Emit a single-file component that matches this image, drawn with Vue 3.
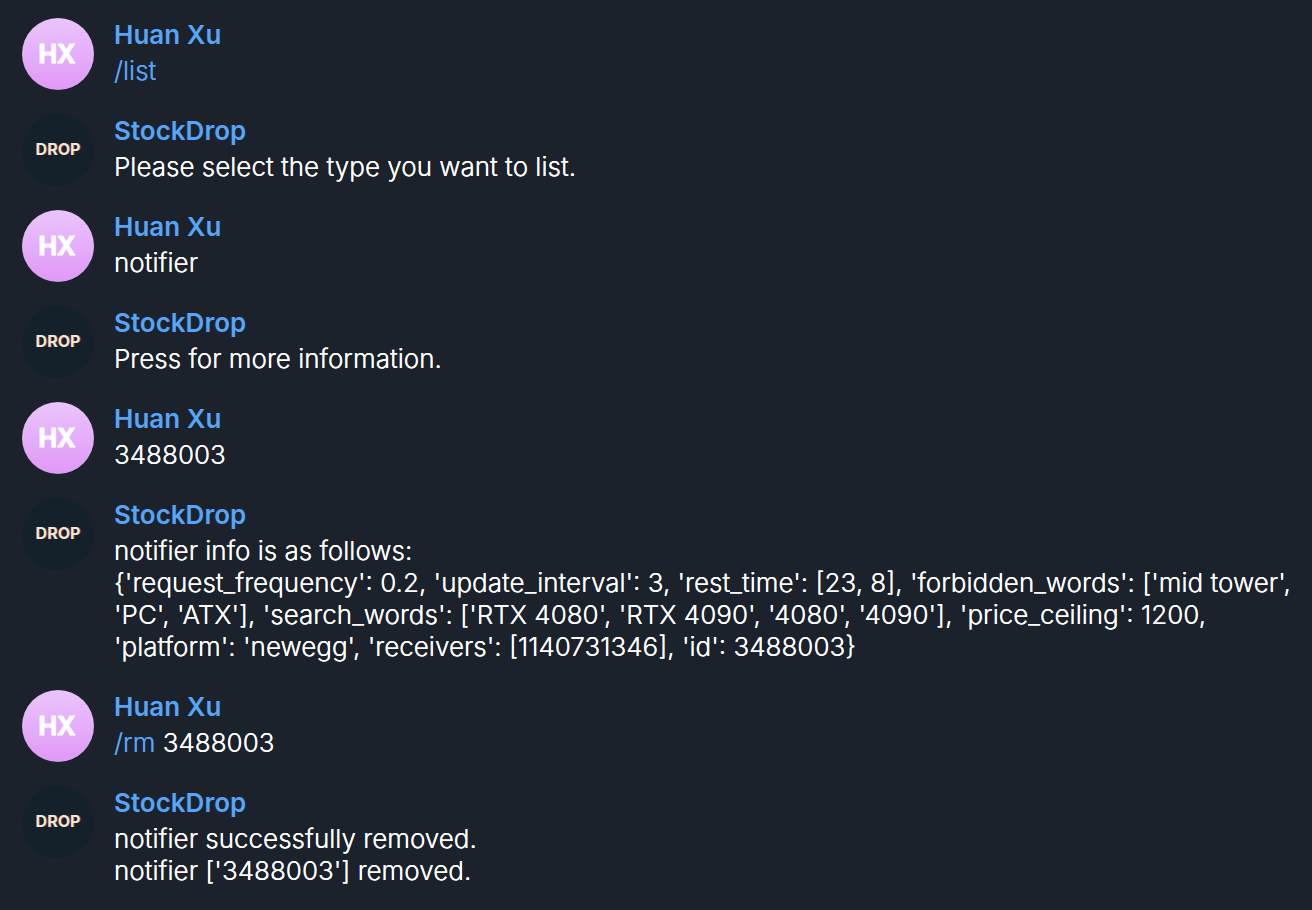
<script setup>
const huan = { name: 'Huan Xu', kind: 'person', initials: 'HX' }
const bot = { name: 'StockDrop', kind: 'bot', initials: 'DROP' }

const messages = [
  { id: 1, from: huan, command: '/list', lines: [''] },
  { id: 2, from: bot, lines: ['Please select the type you want to list.'] },
  { id: 3, from: huan, lines: ['notifier'] },
  { id: 4, from: bot, lines: ['Press for more information.'] },
  { id: 5, from: huan, lines: ['3488003'] },
  {
    id: 6,
    from: bot,
    lines: [
      'notifier info is as follows:',
      "{'request_frequency': 0.2, 'update_interval': 3, 'rest_time': [23, 8], 'forbidden_words': ['mid tower', 'PC', 'ATX'], 'search_words': ['RTX 4080', 'RTX 4090', '4080', '4090'], 'price_ceiling': 1200, 'platform': 'newegg', 'receivers': [1140731346], 'id': 3488003}",
    ],
  },
  { id: 7, from: huan, command: '/rm', lines: [' 3488003'] },
  { id: 8, from: bot, lines: ['notifier successfully removed.', "notifier ['3488003'] removed."] },
]
</script>

<template>
  <main class="chat">
    <article v-for="m in messages" :key="m.id" class="message">
      <svg class="avatar" :class="m.from.kind" viewBox="0 0 72 72" aria-hidden="true">
        <text :x="m.from.kind === 'person' ? 35 : 36" :y="m.from.kind === 'person' ? 45 : 41" text-anchor="middle">{{ m.from.initials }}</text>
      </svg>
      <div class="content">
        <h2 class="name">{{ m.from.name }}</h2>
        <p v-for="(line, i) in m.lines" :key="i" class="line"><a v-if="m.command && i === 0" class="command" href="#">{{ m.command }}</a>{{ line }}</p>
      </div>
    </article>
  </main>
</template>

<style>
body {
  background: #1b222b;
}
</style>

<style scoped>
.chat {
  display: flex;
  flex-direction: column;
  gap: 24px;
  padding: 18px 4px 18px 22px;
  font-family: Inter, "Liberation Sans", sans-serif;
  font-size: 26px;
  font-weight: 300;
  color: #fff;
}
.message {
  display: flex;
  gap: 20px;
}
.avatar {
  flex: none;
  width: 72px;
  height: 72px;
  border-radius: 50%;
}
.person {
  background: linear-gradient(#e9c4fb, #e098f8);
  fill: #fff;
  stroke: #fff;
  stroke-width: 1px;
  stroke-linejoin: round;
  font-size: 25px;
  font-weight: 700;
}
.bot {
  background: #14212b;
  fill: #f3e6d6;
  font-size: 16px;
  font-weight: 700;
  text-shadow: 1px 0 0 #70352f;
}
.content {
  flex: 1;
  min-width: 0;
  padding-bottom: 3px;
}
.name {
  margin: 0 0 3px;
  font-size: 26px;
  font-weight: 600;
  line-height: 34px;
  color: #57a5f7;
}
.line {
  margin: 0;
  line-height: 32px;
  text-shadow: 0 0 0 currentColor;
}
.command {
  color: #57a5f7;
  text-decoration: none;
  text-shadow: 0 0 0 currentColor;
}
</style>
